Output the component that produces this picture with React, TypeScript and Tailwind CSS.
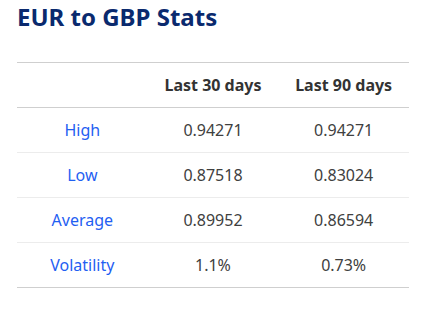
const rows = [
  { label: "High", d30: "0.94271", d90: "0.94271" },
  { label: "Low", d30: "0.87518", d90: "0.83024" },
  { label: "Average", d30: "0.89952", d90: "0.86594" },
  { label: "Volatility", d30: "1.1%", d90: "0.73%" },
];

export default function App() {
  return (
    <div className="w-[439px] h-[310px] bg-white px-[17px] pt-[1px] font-['Noto_Sans',sans-serif]">
      <h2 className="text-[24px] leading-[32px] font-bold text-[#0a2a6e]">EUR to GBP Stats</h2>
      <table className="w-[392px] mt-[29px] table-fixed border-collapse text-[16px] text-[#404040]">
        <thead>
          <tr className="h-[45px] border-t border-b border-[#cfcfcf]">
            <th></th>
            <th className="font-bold text-[#333]">Last 30 days</th>
            <th className="font-bold text-[#333]">Last 90 days</th>
          </tr>
        </thead>
        <tbody>
          {rows.map((r, i) => (
            <tr
              key={r.label}
              className={
                i === rows.length - 1
                  ? "h-[45px] border-b border-[#cfcfcf]"
                  : "h-[45px] border-b border-[#ececec]"
              }
            >
              <td className="text-center text-[#1f60f2]">{r.label}</td>
              <td className="text-center">{r.d30}</td>
              <td className="text-center">{r.d90}</td>
            </tr>
          ))}
        </tbody>
      </table>
    </div>
  );
}
